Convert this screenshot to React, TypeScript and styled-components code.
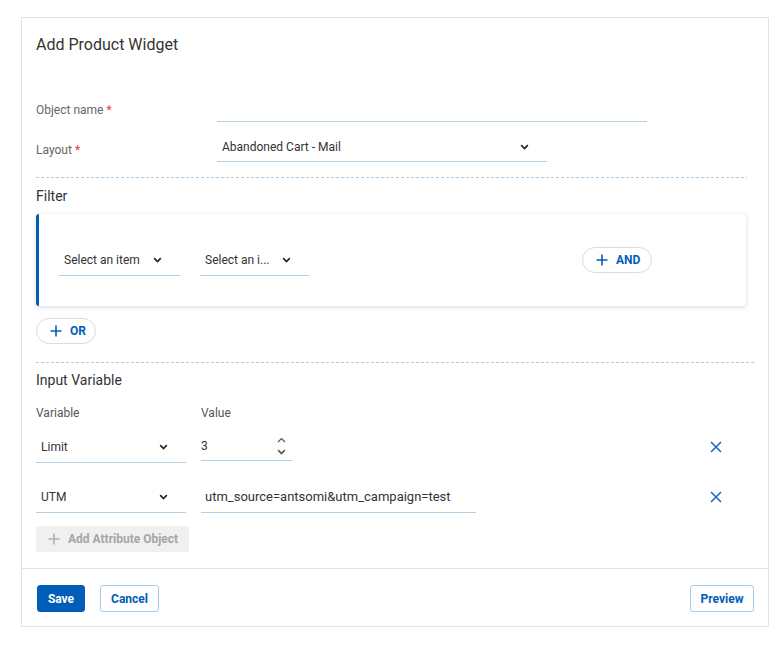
import React from "react";
import styled, { createGlobalStyle } from "styled-components";

const BLUE = "#005eb8";
const LINE = "#b3cfe3";

const GlobalStyle = createGlobalStyle`
  html, body { margin: 0; padding: 0; background: #fff; }
  body { font-family: Roboto, "Noto Sans", Arial, sans-serif; color: #333; }
  #root { padding: 17px 0 0 21px; }
  * { box-sizing: border-box; }
`;

const Panel = styled.div`
  width: 748px;
  height: 610px;
  border: 1px solid #e2e2e2;
  display: flex;
  flex-direction: column;
  background: #fff;
`;

const Header = styled.div`
  padding: 17px 14px 0;
`;

const Title = styled.h1`
  margin: 0;
  font-size: 16px;
  line-height: 20px;
  font-weight: 400;
  color: #333;
`;

const Body = styled.div`
  padding: 0 12px 0 14px;
  display: flex;
  flex-direction: column;
`;

const FieldRow = styled.div<{ $mt: number }>`
  display: grid;
  grid-template-columns: 181px auto;
  align-items: center;
  margin-top: ${(p) => p.$mt}px;
`;

const FieldLabel = styled.div`
  font-size: 12px;
  line-height: 16px;
  color: #666;
  padding-top: 4px;
`;

const Required = styled.span`
  color: #e53935;
  margin-left: 3px;
`;

const Underline = styled.div<{ $w: number; $h?: number; $size?: number }>`
  width: ${(p) => p.$w}px;
  height: ${(p) => p.$h ?? 29}px;
  border-bottom: 1px solid ${LINE};
  display: flex;
  align-items: center;
  padding: 0 18px 0 5px;
  font-size: ${(p) => p.$size ?? 12}px;
  color: #333;
  position: relative;
  white-space: nowrap;
`;

const SelectText = styled.span`
  flex: 1;
  overflow: hidden;
  white-space: nowrap;
`;

const Divider = styled.div<{ $mr: number; $mt: number }>`
  height: 1px;
  margin-top: ${(p) => p.$mt}px;
  margin-right: ${(p) => p.$mr}px;
  background-image: repeating-linear-gradient(
    to right,
    #a9cdea 0 3px,
    transparent 3px 5px
  );
`;

const SectionTitle = styled.h2<{ $mt: number }>`
  margin: ${(p) => p.$mt}px 0 0;
  font-size: 14px;
  line-height: 18px;
  font-weight: 400;
  color: #333;
`;

const FilterCard = styled.div`
  margin-top: 9px;
  margin-right: 10px;
  height: 92px;
  border-left: 3px solid ${BLUE};
  border-radius: 3px;
  box-shadow: 0 1px 4px rgba(0, 0, 0, 0.16);
  display: flex;
  align-items: center;
  padding-left: 20px;
  padding-right: 94px;
  gap: 20px;
`;

const PillButton = styled.button<{ $w: number; $ml?: string; $mt?: number }>`
  width: ${(p) => p.$w}px;
  height: 26px;
  margin-left: ${(p) => p.$ml ?? "0"};
  margin-top: ${(p) => p.$mt ?? 0}px;
  border: 1px solid #dcdcdc;
  border-radius: 13px;
  background: #fff;
  display: flex;
  align-items: center;
  gap: 8px;
  padding: 0 0 0 13px;
  font-family: Roboto, Arial, sans-serif;
  font-size: 12px;
  font-weight: 700;
  color: ${BLUE};
  cursor: pointer;
  align-self: flex-start;
`;

const VarHeaderRow = styled.div`
  display: flex;
  margin-top: 16px;
  font-size: 12px;
  line-height: 16px;
  color: #555;
`;

const VarHeadCell = styled.div<{ $w: number }>`
  width: ${(p) => p.$w}px;
`;

const VarRow = styled.div<{ $mt: number }>`
  display: flex;
  align-items: flex-start;
  gap: 15px;
  margin-top: ${(p) => p.$mt}px;
`;

const Spinner = styled.div`
  position: absolute;
  right: 6px;
  top: 0;
  height: 30px;
  display: flex;
  flex-direction: column;
  justify-content: center;
  gap: 6px;
`;

const RemoveButton = styled.button`
  margin-left: auto;
  margin-right: 34px;
  margin-top: 10px;
  width: 12px;
  height: 12px;
  padding: 0;
  border: 0;
  background: none;
  display: flex;
  cursor: pointer;
`;

const AddAttrButton = styled.button`
  margin-top: 13px;
  width: 153px;
  height: 26px;
  border: 0;
  border-radius: 3px;
  background: #f0f0f0;
  color: #a6a6a6;
  font-family: Roboto, Arial, sans-serif;
  font-size: 12px;
  font-weight: 700;
  display: flex;
  align-items: center;
  gap: 8px;
  padding: 0 0 0 12px;
  align-self: flex-start;
`;

const Footer = styled.div`
  margin-top: auto;
  border-top: 1px solid #e2e2e2;
  padding: 16px 14px 14px 15px;
  display: flex;
  align-items: center;
  gap: 15px;
`;

const FooterButton = styled.button<{ $primary?: boolean; $w: number; $ml?: string }>`
  width: ${(p) => p.$w}px;
  height: 27px;
  margin-left: ${(p) => p.$ml ?? "0"};
  border-radius: 3px;
  border: 1px solid ${(p) => (p.$primary ? BLUE : "#a9cbe6")};
  background: ${(p) => (p.$primary ? BLUE : "#fff")};
  color: ${(p) => (p.$primary ? "#fff" : BLUE)};
  font-family: Roboto, Arial, sans-serif;
  font-size: 12px;
  font-weight: 700;
  padding: 0;
  cursor: pointer;
`;

const Chevron = ({ up, color = "#222", w = 9 }: { up?: boolean; color?: string; w?: number }) => (
  <svg width={w} height="6" viewBox="0 0 9 6" fill="none" style={{ flexShrink: 0 }}>
    <path
      d={up ? "M1 5L4.5 1.5L8 5" : "M1.2 1.2L4.5 4.5L7.8 1.2"}
      stroke={color}
      strokeWidth={up ? 1.1 : 1.7}
    />
  </svg>
);

const Plus = ({ color }: { color: string }) => (
  <svg width="12" height="12" viewBox="0 0 12 12" style={{ flexShrink: 0 }}>
    <path d="M6 0.5V11.5M0.5 6H11.5" stroke={color} strokeWidth="1.6" />
  </svg>
);

const Cross = () => (
  <svg width="12" height="12" viewBox="0 0 12 12">
    <path d="M1 1L11 11M11 1L1 11" stroke="#1b6bc4" strokeWidth="1.6" />
  </svg>
);

const Select = ({ w, h, text, size }: { w: number; h?: number; text: string; size?: number }) => (
  <Underline $w={w} $h={h} $size={size}>
    <SelectText>{text}</SelectText>
    <Chevron />
  </Underline>
);

export default function App() {
  return (
    <>
      <GlobalStyle />
      <Panel>
        <Header>
          <Title>Add Product Widget</Title>
        </Header>
        <Body>
          <FieldRow $mt={38}>
            <FieldLabel>
              Object name<Required>*</Required>
            </FieldLabel>
            <Underline $w={430} />
          </FieldRow>
          <FieldRow $mt={11}>
            <FieldLabel>
              Layout<Required>*</Required>
            </FieldLabel>
            <Select w={330} text="Abandoned Cart - Mail" />
          </FieldRow>

          <Divider $mt={15} $mr={9} />
          <SectionTitle $mt={9}>Filter</SectionTitle>
          <FilterCard>
            <Select w={121} h={32} text="Select an item" />
            <Select w={109} h={32} text="Select an i..." />
            <PillButton $w={70} $ml="auto" style={{ alignSelf: "center" }}>
              <Plus color={BLUE} />
              AND
            </PillButton>
          </FilterCard>
          <PillButton $w={60} $mt={12}>
            <Plus color={BLUE} />
            OR
          </PillButton>

          <Divider $mt={18} $mr={0} />
          <SectionTitle $mt={8}>Input Variable</SectionTitle>
          <VarHeaderRow>
            <VarHeadCell $w={165}>Variable</VarHeadCell>
            <VarHeadCell $w={90}>Value</VarHeadCell>
          </VarHeaderRow>
          <VarRow $mt={10}>
            <Select w={150} h={32} text="Limit" />
            <Underline $w={91} $h={30} $size={12} style={{ paddingLeft: 0 }}>
              3
              <Spinner>
                <Chevron up color="#555" w={9} />
                <Chevron color="#555" w={9} />
              </Spinner>
            </Underline>
            <RemoveButton aria-label="remove">
              <Cross />
            </RemoveButton>
          </VarRow>
          <VarRow $mt={18}>
            <Select w={150} h={32} text="UTM" />
            <Underline $w={275} $h={32} $size={13} style={{ paddingLeft: 4 }}>
              utm_source=antsomi&amp;utm_campaign=test
            </Underline>
            <RemoveButton aria-label="remove">
              <Cross />
            </RemoveButton>
          </VarRow>
          <AddAttrButton disabled>
            <Plus color="#b0b0b0" />
            Add Attribute Object
          </AddAttrButton>
        </Body>
        <Footer>
          <FooterButton $primary $w={48}>
            Save
          </FooterButton>
          <FooterButton $w={59}>Cancel</FooterButton>
          <FooterButton $w={64} $ml="auto">
            Preview
          </FooterButton>
        </Footer>
      </Panel>
    </>
  );
}
